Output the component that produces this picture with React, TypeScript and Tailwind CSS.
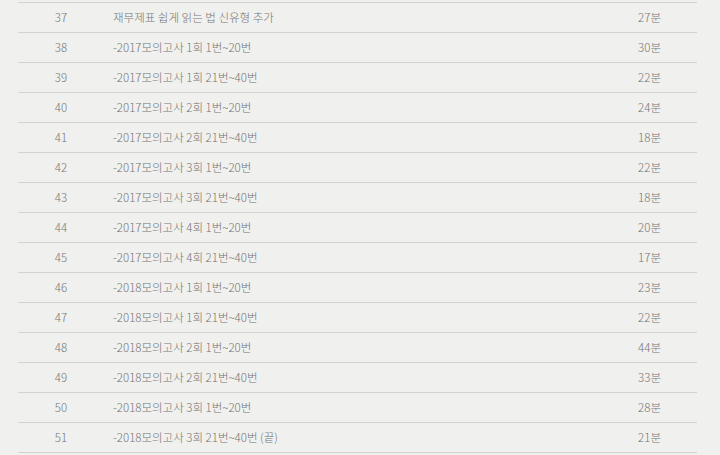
import React from "react";

const rows: [number, string, string][] = [
  [37, "재무제표 쉽게 읽는 법 신유형 추가", "27분"],
  [38, "-2017모의고사 1회 1번~20번", "30분"],
  [39, "-2017모의고사 1회 21번~40번", "22분"],
  [40, "-2017모의고사 2회 1번~20번", "24분"],
  [41, "-2017모의고사 2회 21번~40번", "18분"],
  [42, "-2017모의고사 3회 1번~20번", "22분"],
  [43, "-2017모의고사 3회 21번~40번", "18분"],
  [44, "-2017모의고사 4회 1번~20번", "20분"],
  [45, "-2017모의고사 4회 21번~40번", "17분"],
  [46, "-2018모의고사 1회 1번~20번", "23분"],
  [47, "-2018모의고사 1회 21번~40번", "22분"],
  [48, "-2018모의고사 2회 1번~20번", "44분"],
  [49, "-2018모의고사 2회 21번~40번", "33분"],
  [50, "-2018모의고사 3회 1번~20번", "28분"],
  [51, "-2018모의고사 3회 21번~40번 (끝)", "21분"],
];

export default function App() {
  return (
    <div
      className="w-[720px] h-[455px] overflow-hidden bg-[#f0f0ee] text-[#747474] text-[11.5px] font-light"
      style={{ fontFamily: '"Noto Sans CJK KR", "Noto Sans", sans-serif' }}
    >
      <div className="ml-[18px] mr-[23px] mt-[2px] border-t border-[#d3d3d0]">
        {rows.map(([n, t, d]) => (
          <div key={n} className="flex items-center h-[30px] border-b border-[#d3d3d0]">
            <div className="w-[86px] text-center">{n}</div>
            <div className="ml-[9px] flex-1">{t}</div>
            <div className="pr-[36px]">{d}</div>
          </div>
        ))}
      </div>
    </div>
  );
}
